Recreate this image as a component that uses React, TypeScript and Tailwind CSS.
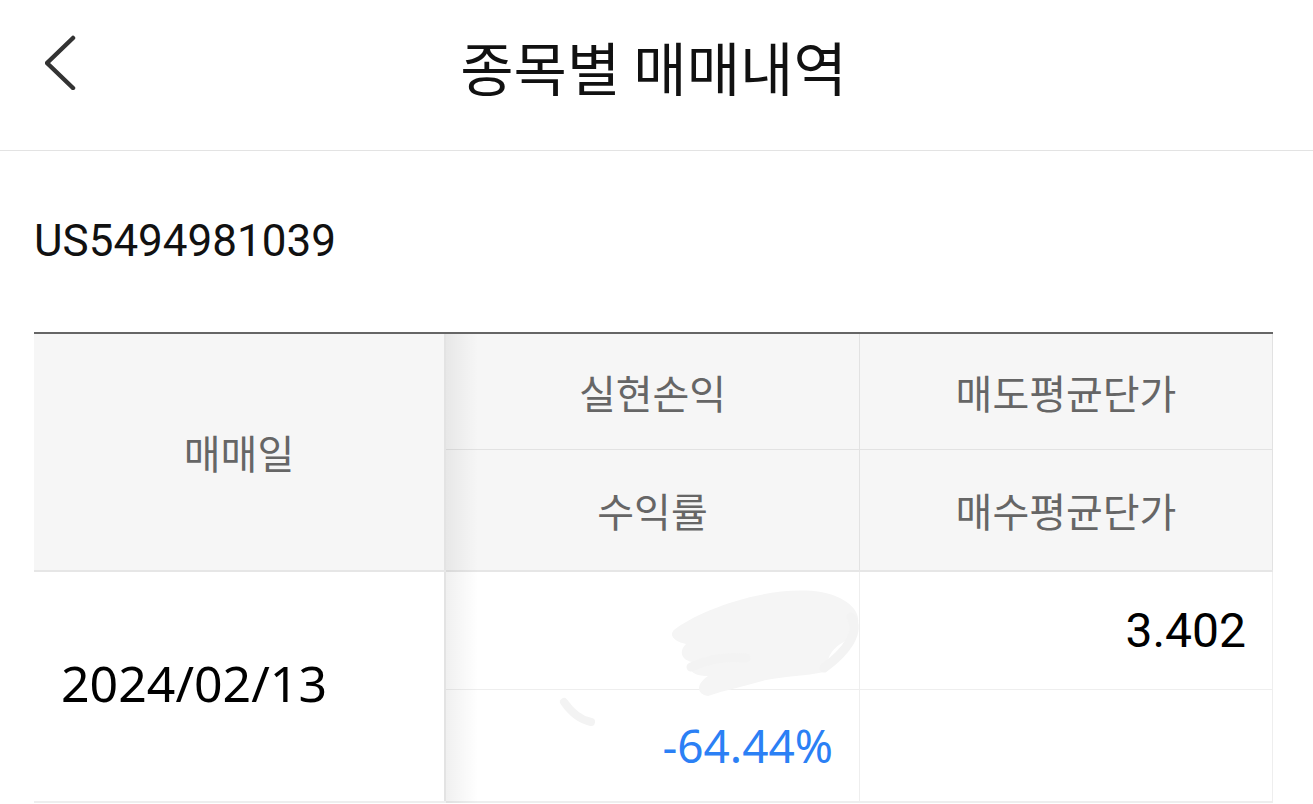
import { useState } from "react";

// One trade row split over two lines (amount / rate)
type Trade = {
  date: string;
  profit: string;
  rate: string;
  sellAvg: string;
  buyAvg: string;
};

const trades: Trade[] = [
  { date: "2024/02/13", profit: "", rate: "-64.44%", sellAvg: "3.402", buyAvg: "" },
];

const BackIcon = () => (
  <svg width="40" height="60" viewBox="0 0 40 60" fill="none">
    <path
      d="M28 8 L2 33 L28 58"
      stroke="#333"
      strokeWidth="4.5"
      strokeLinecap="round"
      strokeLinejoin="round"
    />
  </svg>
);

// light redaction scribble that sits over the profit cell
const Scribble = () => (
  <svg
    className="absolute left-0 top-0 pointer-events-none"
    width="420"
    height="160"
    viewBox="0 0 420 160"
    fill="none"
  >
    <path
      d="M228 58 C 250 40, 320 12, 375 20 C 405 26, 418 42, 410 58 C 402 72, 388 70, 382 88 L 378 100 C 360 104, 340 104, 320 108 C 300 114, 280 118, 262 124 C 250 122, 250 112, 262 104 C 250 104, 240 100, 246 90 C 236 88, 232 80, 240 72 C 230 70, 222 64, 228 58 Z"
      fill="#f5f5f5"
    />
    <g stroke="#f3f3f3" strokeWidth="9" strokeLinecap="round" strokeLinejoin="round">
      <path d="M405 45 C 415 60, 400 80, 378 96" />
      <path d="M245 95 C 260 88, 280 84, 300 86" />
      <path d="M118 130 C 125 140, 135 148, 145 150" strokeWidth="8" />
    </g>
  </svg>
);

export default function App() {
  const [rows] = useState(trades);

  return (
    <div className="min-h-screen bg-white font-['Noto_Sans_CJK_KR',sans-serif]">
      {/* Top bar */}
      <div className="relative h-[151px] border-b border-[#e3e3e3] flex items-center justify-center pb-[18px]">
        <button className="absolute left-[45px] top-[30px]">
          <BackIcon />
        </button>
        <h1 className="text-[58px] font-normal text-[#111] font-['Noto_Sans_CJK_KR',sans-serif] ml-[-6px]">
          종목별 매매내역
        </h1>
      </div>

      {/* Ticker */}
      <div className="pl-[34px] pt-[68px] text-[44px] leading-none text-[#111] font-['Roboto','Noto_Sans_CJK_KR',sans-serif]">
        US5494981039
      </div>

      {/* Table */}
      <div className="relative ml-[34px] mr-[40px] mt-[69px] border-t-2 border-[#666]">
        {/* Header */}
        <div className="grid grid-cols-[412px_414px_1fr] bg-[#f6f6f6] border-b-2 border-[#e6e6e6] text-[40px] text-[#666]">
          <div className="row-span-2 flex items-center justify-center border-r-2 border-[#e3e3e3]">
            매매일
          </div>
          <div className="h-[116px] flex items-center justify-center border-b border-r border-[#e2e2e2]">
            실현손익
          </div>
          <div className="h-[116px] flex items-center justify-center border-b border-r border-[#e2e2e2]">
            매도평균단가
          </div>
          <div className="h-[120px] flex items-center justify-center border-r border-[#e2e2e2]">
            수익률
          </div>
          <div className="h-[120px] flex items-center justify-center border-r border-[#e2e2e2]">
            매수평균단가
          </div>
        </div>

        {/* Body */}
        {rows.map((t) => (
          <div
            key={t.date}
            className="grid grid-cols-[412px_414px_1fr] border-b-2 border-[#eeeeee] text-[48px] text-black"
          >
            <div className="row-span-2 flex items-center pl-[27px] pb-[6px] border-r-2 border-[#e3e3e3] font-['Noto_Sans',sans-serif] text-[50px]">
              {t.date}
            </div>
            <div className="relative h-[118px] flex items-center justify-end pr-[27px] border-b border-r border-[#eeeeee]">
              {t.profit}
              <Scribble />
            </div>
            <div className="h-[118px] flex items-center justify-end pr-[26px] border-b border-r border-[#eeeeee] font-['Roboto',sans-serif]">
              {t.sellAvg}
            </div>
            <div className="h-[111px] flex items-center justify-end pr-[26px] border-r border-[#eeeeee] text-[#2b80f5] font-['Noto_Sans',sans-serif] text-[46px]">
              {t.rate}
            </div>
            <div className="h-[111px] flex items-center justify-end pr-[26px] border-r border-[#eeeeee] font-['Roboto',sans-serif]">
              {t.buyAvg}
            </div>
          </div>
        ))}

        {/* fixed-column shadow */}
        <div className="absolute left-[412px] top-0 bottom-0 w-[32px] bg-gradient-to-r from-black/[0.06] to-transparent pointer-events-none" />
      </div>
    </div>
  );
}
